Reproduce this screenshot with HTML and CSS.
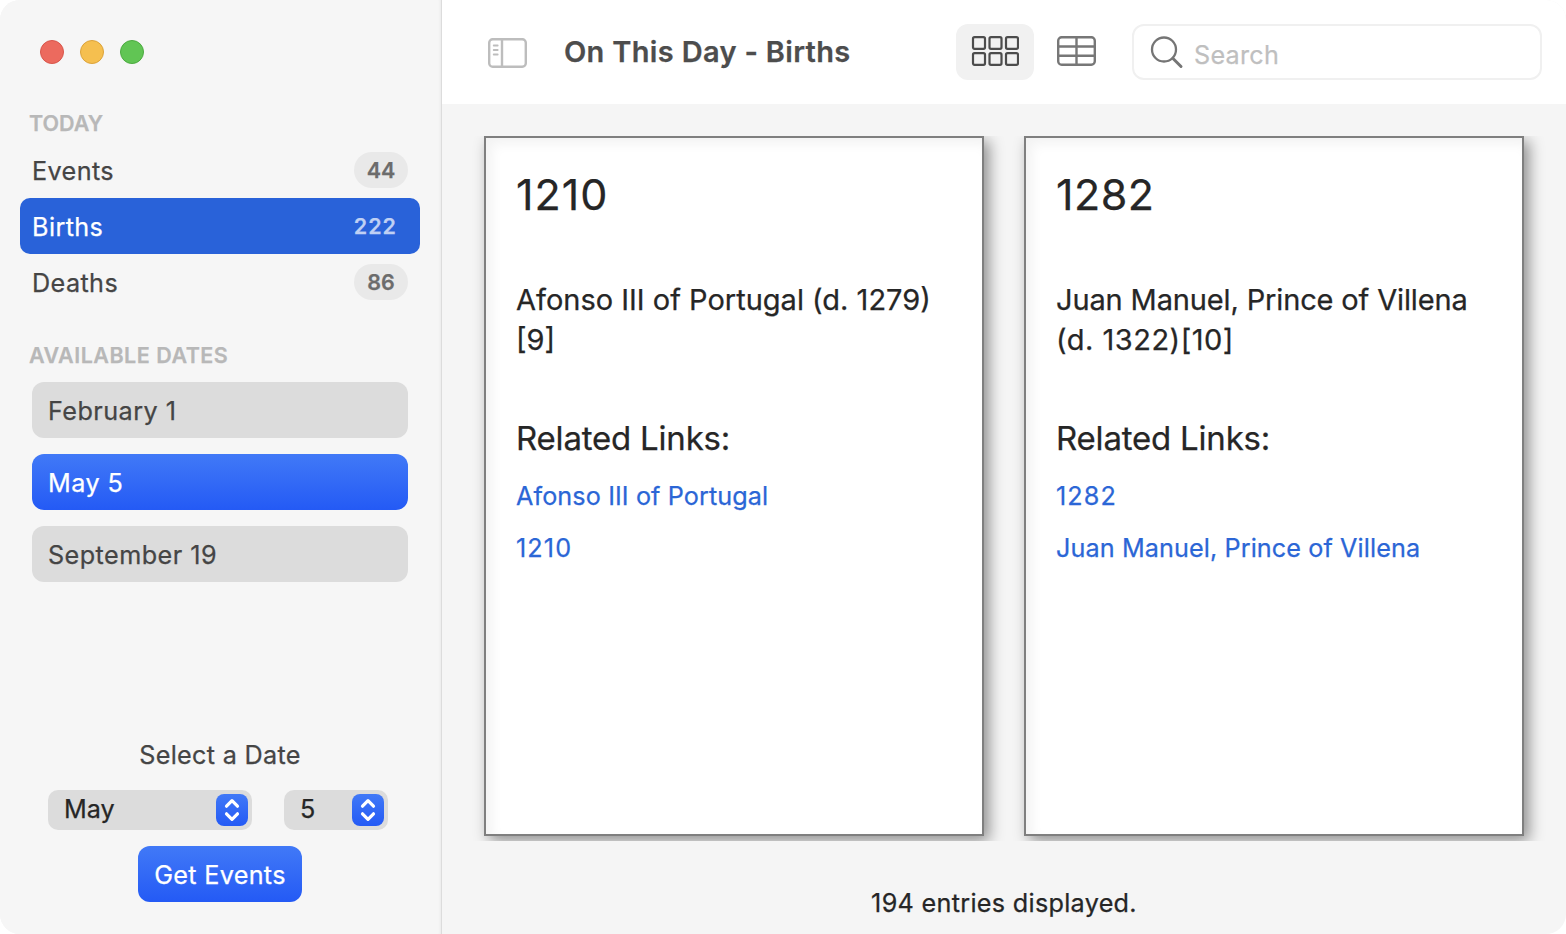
FILE: index.html
```html
<!DOCTYPE html>
<html lang="en">
<head>
<meta charset="utf-8">
<title>On This Day - Births</title>
<link rel="stylesheet" href="styles.css">
</head>
<body>
<div class="window">
  <aside class="sidebar">
    <div class="lights"><i class="light red"></i><i class="light yellow"></i><i class="light green"></i></div>
    <h2 class="section">TODAY</h2>
    <nav class="nav">
      <a class="row"><span class="name">Events</span><b class="badge">44</b></a>
      <a class="row selected"><span class="name">Births</span><b class="badge">222</b></a>
      <a class="row"><span class="name">Deaths</span><b class="badge">86</b></a>
    </nav>
    <h2 class="section dates-title">AVAILABLE DATES</h2>
    <div class="dates">
      <button class="date">February 1</button>
      <button class="date active">May 5</button>
      <button class="date">September 19</button>
    </div>
    <div class="picker">
      <p class="picker-label">Select a Date</p>
      <div class="popups">
        <div class="popup month"><span class="value">May</span><span class="step"><svg width="32" height="32" viewBox="0 0 32 32"><path d="M10.500 12.200 16 6.600l5.500 5.600M10.500 19.800 16 25.400l5.500-5.600"/></svg></span></div>
        <div class="popup day"><span class="value">5</span><span class="step"><svg width="32" height="32" viewBox="0 0 32 32"><path d="M10.500 12.200 16 6.600l5.500 5.600M10.500 19.800 16 25.400l5.500-5.600"/></svg></span></div>
      </div>
      <button class="get">Get Events</button>
    </div>
  </aside>
  <main class="main">
    <header class="toolbar">
      <svg class="toggle" width="40" height="32" viewBox="0 0 40 32"><rect x="1.200" y="3.200" width="36.600" height="27.600" rx="3.500"/><path d="M14 3v28"/><path class="thin" d="M5.700 9.500h4M5.700 14h4M5.700 18.500h4"/></svg>
      <h1 class="title">On This Day - Births</h1>
      <div class="view on"><svg width="48" height="32" viewBox="0 0 48 32"><g class="grid-icon"><rect x="2" y="1.200" width="12" height="11.600" rx="1.500"/><rect x="18.500" y="1.200" width="12" height="11.600" rx="1.500"/><rect x="35" y="1.200" width="12" height="11.600" rx="1.500"/><rect x="2" y="17.200" width="12" height="11.600" rx="1.500"/><rect x="18.500" y="17.200" width="12" height="11.600" rx="1.500"/><rect x="35" y="17.200" width="12" height="11.600" rx="1.500"/></g></svg></div>
      <div class="view table"><svg width="40" height="32" viewBox="0 0 40 32"><g class="table-icon"><rect x="1.200" y="1.200" width="36.600" height="27.600" rx="3.500"/><path d="M1 10.500h37M1 19.700h37M19.500 1v28"/></g></svg></div>
      <div class="search"><svg width="36" height="36" viewBox="0 0 36 36"><circle cx="14" cy="15.500" r="12"/><path d="M23 24.500l8 8"/></svg><span class="placeholder">Search</span></div>
    </header>
    <section class="cards">
      <article class="card">
        <h2 class="year wide">1210</h2>
        <p class="text">Afonso III of Portugal (d. 1279)<br>[9]</p>
        <h3 class="related">Related Links:</h3>
        <a class="link">Afonso III of Portugal</a>
        <a class="link number">1210</a>
      </article>
      <article class="card">
        <h2 class="year">1282</h2>
        <p class="text"><span class="tight">Juan Manuel, Prince of Villena</span><br><span class="loose">(d. 1322)[10]</span></p>
        <h3 class="related">Related Links:</h3>
        <a class="link number">1282</a>
        <a class="link">Juan Manuel, Prince of Villena</a>
      </article>
    </section>
    <footer class="status">194 entries displayed.</footer>
  </main>
</div>
</body>
</html>
```
FILE: styles.css
```css
* { box-sizing: border-box; margin: 0; padding: 0; }
body { background: #fff; font-family: Inter, "Liberation Sans", sans-serif; font-size: 25.2px; color: #454545; -webkit-text-stroke-width: 0.25px; }
.window { display: flex; width: 1566px; height: 934px; border-radius: 20px; overflow: hidden; background: #f5f5f5; }
button { font: inherit; color: inherit; border: 0; text-align: left; }
svg { display: block; flex: none; fill: none; }

/* Sidebar */
.sidebar { display: flex; flex-direction: column; width: 442px; height: 934px; padding: 40px 21px 32px 20px; background: #f6f6f6; border-right: 1px solid #dcdcdc; box-shadow: inset -3px 0 3px -2px rgba(0,0,0,.05); }
.lights { display: flex; gap: 16px; padding-left: 20px; }
.light { width: 24px; height: 24px; border-radius: 50%; border: 1px solid #d8564b; background: #ec6a5e; }
.yellow { background: #f5bf4f; border-color: #dca33a; }
.green { background: #61c554; border-color: #4cab40; }
.section { margin-top: 44px; padding-left: 9px; font-size: 21.5px; line-height: 30px; font-weight: 600; color: #b8b8b8; }
.nav { margin-top: 4px; }
.row { display: flex; justify-content: space-between; align-items: center; height: 56px; padding: 0 12px; border-radius: 10px; letter-spacing: .4px; }
.name { padding-top: 2px; }
.badge { min-width: 54px; height: 36px; line-height: 36px; border-radius: 18px; background: #e9e9e9; font-size: 21.5px; font-weight: 600; letter-spacing: 0; text-align: center; color: #6c6c6c; }
.selected { background: #2962d9; color: #fff; }
.selected .badge { padding-right: 11px; background: none; letter-spacing: 1px; text-align: right; color: #bfd0f4; }
.dates-title { margin-top: 30px; letter-spacing: .5px; }
.dates { display: flex; flex-direction: column; gap: 16px; margin-top: 12px; padding: 0 12px; }
.date { height: 56px; padding: 2px 16px 0; border-radius: 12px; background: #dcdcdc; letter-spacing: .45px; }
.active, .get, .step { background: linear-gradient(#4179f7, #245af5); color: #fff; }

/* Date picker */
.picker { display: flex; flex-direction: column; align-items: center; margin-top: auto; }
.picker-label { line-height: 36px; letter-spacing: .3px; }
.popups { display: flex; gap: 32px; margin-top: 17px; padding-right: 4px; }
.popup { display: flex; justify-content: space-between; align-items: center; height: 40px; padding: 0 4px 0 16px; border-radius: 10px; background: #dcdcdc; color: #262626; }
.value { padding-bottom: 2px; }
.month { width: 204px; }
.day { width: 104px; }
.step { width: 32px; height: 32px; border-radius: 8px; }
.step path { stroke: #fff; stroke-width: 3.2; stroke-linecap: round; stroke-linejoin: round; }
.get { width: 164px; height: 56px; margin-top: 16px; padding-top: 2px; border-radius: 12px; text-align: center; letter-spacing: .3px; }

/* Toolbar */
.main { display: flex; flex-direction: column; width: 1124px; }
.toolbar { display: flex; align-items: center; height: 104px; padding: 0 24px 0 46px; background: #fff; }
.toggle { stroke: #bdbdbd; stroke-width: 2.4; }
.toggle .thin { stroke-width: 1.8; stroke-linecap: round; }
.title { width: 392px; margin-left: 36px; font-size: 29px; line-height: 40px; font-weight: 600; letter-spacing: .32px; color: #4d4d4d; }
.view { display: flex; align-items: center; justify-content: center; width: 78px; height: 56px; border-radius: 12px; }
.on { background: #f1f1f1; }
.grid-icon { stroke: #4c4c4c; stroke-width: 2.2; }
.table { width: 86px; }
.table-icon { stroke: #777; stroke-width: 2.4; }
.search { display: flex; align-items: center; width: 410px; height: 56px; margin-left: auto; padding-left: 16px; border: 2px solid #f0f0f0; border-radius: 12px; color: #bfbfbf; }
.search circle { stroke: #757575; stroke-width: 2.3; }
.search path { stroke: #757575; stroke-width: 3; stroke-linecap: round; }
.placeholder { margin-left: 8px; padding-top: 6px; letter-spacing: .25px; }

/* Cards */
.cards { display: flex; gap: 40px; margin-top: 32px; padding: 0 0 5px 42px; overflow: hidden; }
.card { flex: none; width: 500px; height: 700px; padding: 26px 30px; border: 2px solid #7f7f7f; background: #fff; color: #262626; box-shadow: 5px 5px 14px rgba(0,0,0,.42), inset 6px 6px 12px rgba(0,0,0,.05); }
.year { font-size: 43px; line-height: 60px; font-weight: 400; letter-spacing: .5px; }
.wide { letter-spacing: 1px; }
.text { margin-top: 56px; font-size: 29px; line-height: 40px; }
.tight { letter-spacing: -.14px; }
.loose { letter-spacing: .5px; }
.related { margin: 56px 0 18px; font-size: 33px; line-height: 44px; font-weight: 400; letter-spacing: -.2px; }
.link { display: block; margin-bottom: 16px; line-height: 36px; letter-spacing: .1px; color: #2b66d6; }
.number { letter-spacing: 1.1px; }
.status { margin-top: 44px; line-height: 36px; letter-spacing: .3px; text-align: center; color: #262626; }
```
